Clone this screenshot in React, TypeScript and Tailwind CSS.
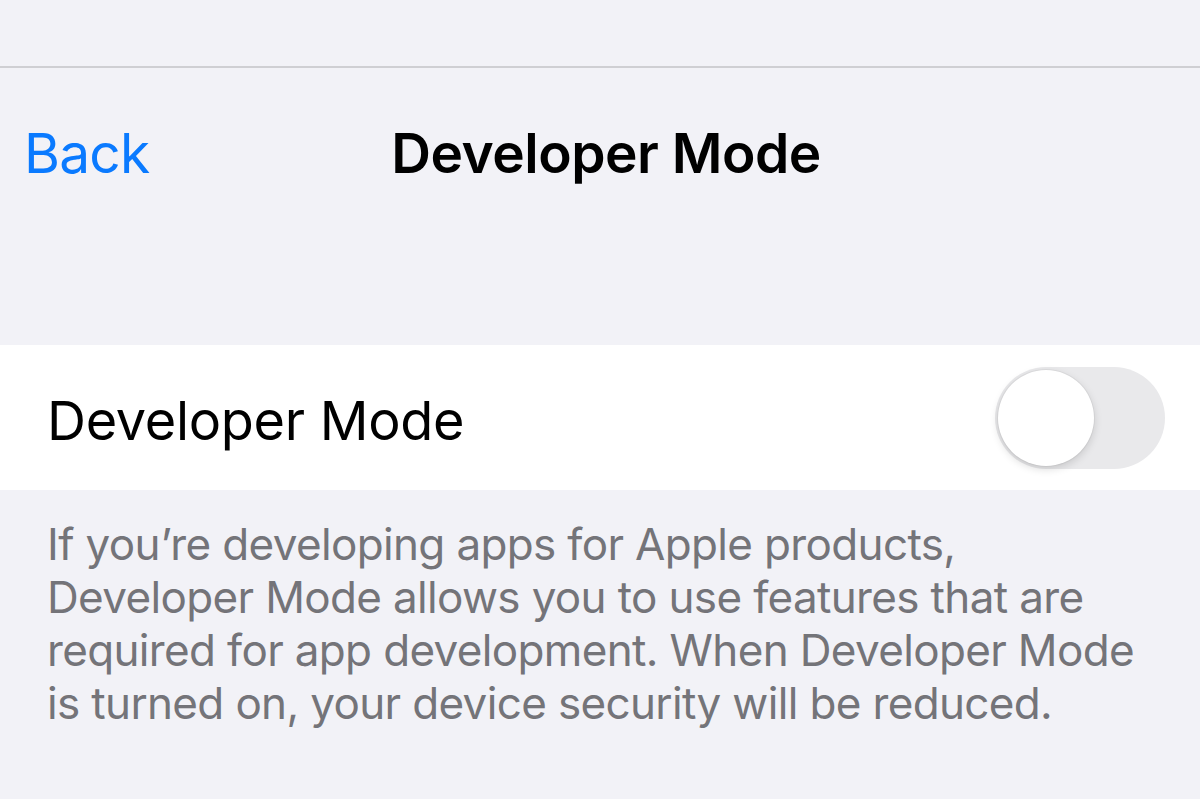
import { useState } from 'react';

export default function App() {
  const [on, setOn] = useState(false);

  return (
    <div
      className="w-[1200px] h-[799px] overflow-hidden bg-[#f2f2f7]"
      style={{ fontFamily: 'Inter, "Noto Sans", sans-serif' }}
    >
      <div className="h-[66px]" />
      <div className="h-[2px] bg-[#cfcfd3]" />

      {/* nav bar */}
      <div className="relative h-[170px] flex items-start pt-[55px]">
        <button className="pl-[24px] text-[55px] leading-[60px] text-[#0a7aff] tracking-[-0.8px]">
          Back
        </button>
        <h1 className="absolute left-0 right-0 top-[55px] text-center text-[55px] leading-[60px] font-semibold text-black tracking-[-0.5px] pl-[12px]">
          Developer Mode
        </h1>
      </div>

      <div className="h-[107px]" />

      {/* toggle cell */}
      <div className="h-[145px] bg-white flex items-center justify-between pl-[47px] pr-[35px]">
        <span className="text-[54px] text-black tracking-[-0.3px] leading-none pt-[6px]">Developer Mode</span>
        <button
          onClick={() => setOn(v => !v)}
          className={`relative w-[170px] h-[102px] rounded-full transition-colors ${on ? 'bg-[#34c759]' : 'bg-[#e9e9eb]'}`}
          aria-label="Developer Mode"
        >
          <span
            className={`absolute top-[3px] w-[96px] h-[96px] rounded-full bg-white shadow-[0_3px_8px_rgba(0,0,0,0.15),0_0_0_1px_rgba(0,0,0,0.04)] transition-all ${on ? 'left-[71px]' : 'left-[3px]'}`}
          />
        </button>
      </div>

      {/* footer */}
      <p className="pl-[47px] pr-[40px] pt-[28px] text-[44px] leading-[53px] text-[#747479] tracking-[-0.65px]">
        If you’re developing apps for Apple products, Developer Mode allows you to use features that are
        required for app development. When Developer Mode is turned on, your device security will be reduced.
      </p>
    </div>
  );
}
